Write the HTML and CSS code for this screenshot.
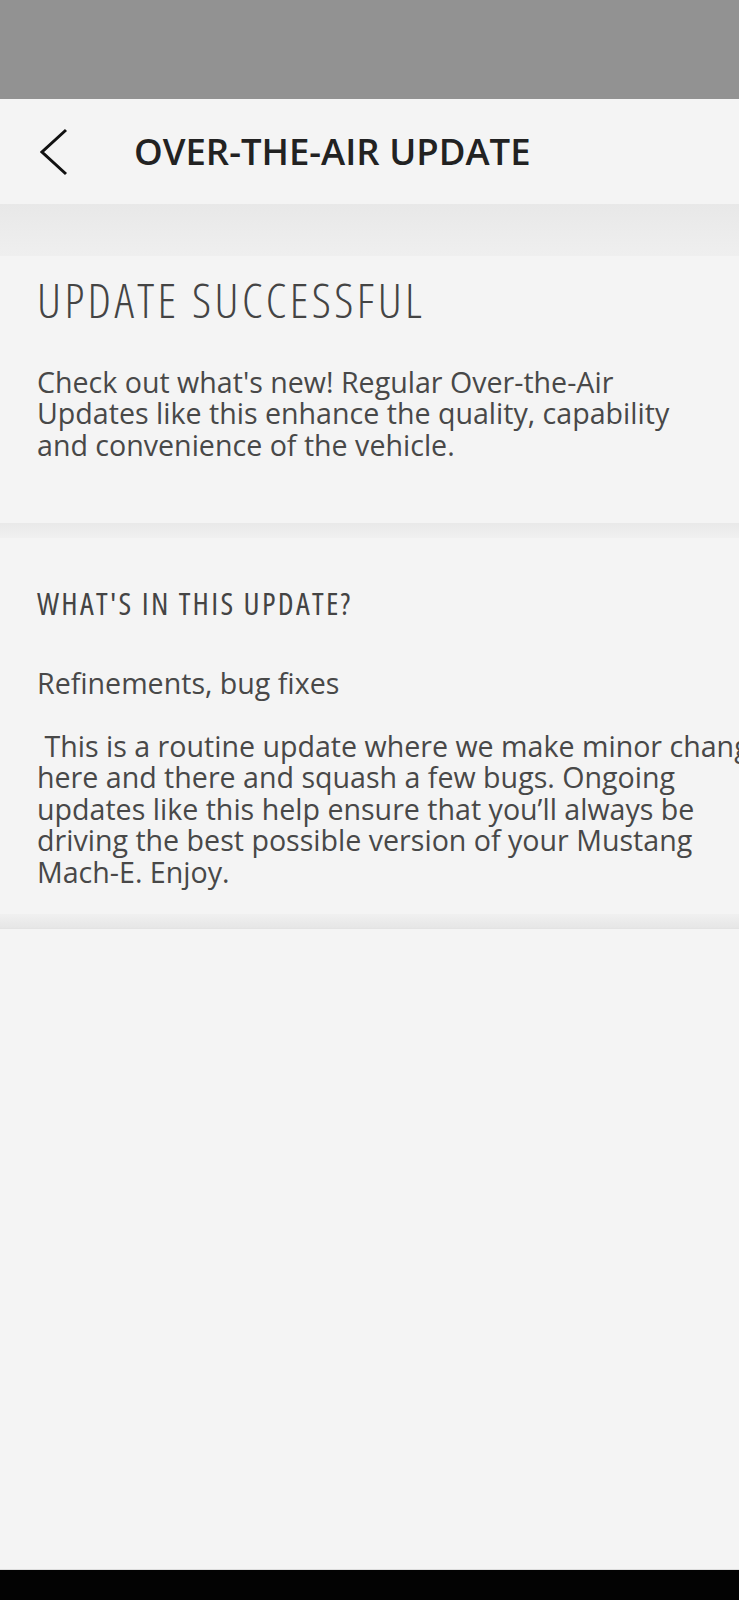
FILE: index.html
```html
<!DOCTYPE html>
<html lang="en">
<head>
	<meta charset="UTF-8">
	<title>Over-the-Air Update</title>
	<link rel="stylesheet" href="styles.css">
</head>
<body>
	<div class="statusbar"></div>
	<div class="header">
		<a href="#" class="back">
			<svg width="28" height="48" viewBox="0 0 28 48"><polyline points="26,2 2,24 26,46" fill="none" stroke="#111" stroke-width="3"/></svg>
		</a>
		<h1 class="title">OVER-THE-AIR UPDATE</h1>
	</div>
	<div class="shade"></div>
	<div class="section first">
		<h2 class="big">UPDATE SUCCESSFUL</h2>
		<p class="text">Check out what's new! Regular Over-the-Air<br>Updates like this enhance the quality, capability<br>and convenience of the vehicle.</p>
	</div>
	<div class="divider"></div>
	<div class="section second">
		<h3 class="sub">WHAT'S IN THIS UPDATE?</h3>
		<p class="text notes">Refinements, bug fixes<br><br>&nbsp;This is a routine update where we make minor changes<br>here and there and squash a few bugs. Ongoing<br>updates like this help ensure that you’ll always be<br>driving the best possible version of your Mustang<br>Mach-E. Enjoy.</p>
	</div>
	<div class="divider bottom"></div>
	<div class="rest"></div>
	<div class="navbar"></div>
</body>
</html>
```
FILE: styles.css
```css
*{
	margin: 0;
	padding: 0;
	box-sizing: border-box;
}
body{
	width: 739px;
	height: 1600px;
	overflow: hidden;
	display: flex;
	flex-direction: column;
	background-color: #f4f4f4;
	font-family: "Open Sans", "Noto Sans", sans-serif;
	color: #484848;
}
.statusbar{
	height: 99px;
	background-color: #929292;
}
.header{
	height: 105px;
	display: flex;
	align-items: center;
	padding-left: 40px;
	background-color: #f4f4f4;
}
.back{
	display: block;
	width: 28px;
	height: 48px;
}
.back svg{
	display: block;
}
.title{
	margin-left: 66px;
	font-size: 36.5px;
	font-weight: 600;
	line-height: 37px;
	color: #222;
	white-space: nowrap;
}
.shade{
	height: 52px;
	background: linear-gradient(#e8e8e8, #efefef);
}
.section{
	padding-left: 37px;
	white-space: nowrap;
}
.first{
	padding-top: 20px;
	padding-bottom: 63px;
}
.big{
	font-size: 48px;
	font-weight: 300;
	font-stretch: 75%;
	letter-spacing: 3.4px;
	line-height: 48px;
	color: #444;
}
.text{
	font-size: 28.6px;
	line-height: 31.4px;
}
.first .text{
	margin-top: 42px;
}
.divider{
	height: 15px;
	background: linear-gradient(#e9e9e9, #f0f0f0);
}
.second{
	padding-top: 50px;
	padding-bottom: 27px;
}
.sub{
	font-size: 31px;
	font-weight: 400;
	font-stretch: 75%;
	letter-spacing: 2.3px;
	line-height: 31px;
	color: #444;
}
.notes{
	margin-top: 48px;
}
.divider.bottom{
	height: 15px;
	background: linear-gradient(#f0f0f0, #e6e6e6);
	border-bottom: 1px solid #e3e3e3;
}
.rest{
	flex: 1;
}
.navbar{
	height: 31px;
	background-color: #030303;
	border-top: 1px solid #dcdcdc;
}
```
